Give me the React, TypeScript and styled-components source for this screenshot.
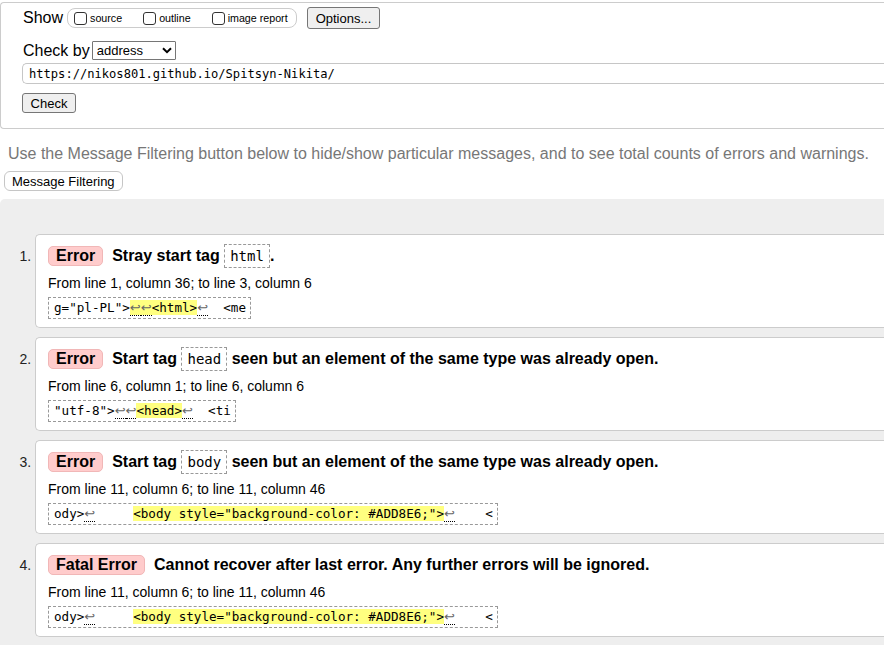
import React from "react";
import styled, { createGlobalStyle } from "styled-components";

const GlobalStyle = createGlobalStyle`
  html, body { margin: 0; padding: 0; background: #fff; }
  body {
    font-family: "Liberation Sans", Arial, sans-serif;
    color: #000;
    overflow: hidden;
  }
  * { box-sizing: border-box; }
`;

const MONO = `"DejaVu Sans Mono", "Liberation Mono", monospace`;

const Page = styled.div`
  display: flex;
  flex-direction: column;
  min-height: 645px;
`;

const Form = styled.form`
  margin-top: 2px;
  border: 1px solid #ccc;
  border-right: none;
  border-radius: 4px 0 0 4px;
  padding: 4px 0 15px 21px;
  display: flex;
  flex-direction: column;
`;

const Row = styled.div<{ $gap?: number; $h: number }>`
  display: flex;
  align-items: center;
  height: ${(p) => p.$h}px;
  margin-top: ${(p) => p.$gap ?? 0}px;
`;

const RowLabel = styled.span<{ $space: number }>`
  font-size: 16px;
  margin: 0 ${(p) => p.$space}px 0 1px;
`;

const CheckGroup = styled.fieldset`
  display: flex;
  align-items: center;
  height: 20px;
  margin: 0;
  padding: 0 8px 0 6px;
  border: 1px solid #ccc;
  border-radius: 8px;
`;

const CheckItem = styled.label`
  display: flex;
  align-items: center;
  font-size: 10.7px;
  & + & { margin-left: 21px; }
`;

const Box = styled.input`
  appearance: none;
  width: 13px;
  height: 13px;
  margin: 0 3px 0 0;
  border: 1px solid #333;
  border-radius: 3px;
  background: #fff;
`;

const GrayButton = styled.button<{ $w?: number; $h: number; $gap?: number }>`
  height: ${(p) => p.$h}px;
  ${(p) => (p.$w ? `width: ${p.$w}px;` : "")}
  margin: ${(p) => p.$gap ?? 0}px 0 0 0;
  padding: 0 7px;
  font: 13px "Liberation Sans", Arial, sans-serif;
  color: #000;
  background: #efefef;
  border: 1px solid #767676;
  border-radius: 3px;
  align-self: flex-start;
`;

const OptionsButton = styled(GrayButton)`
  margin-left: 10px;
  padding: 0 8px;
`;

const SelectWrap = styled.div`
  position: relative;
  width: 84px;
  height: 19px;
`;

const Select = styled.select`
  appearance: none;
  width: 100%;
  height: 100%;
  margin: 0;
  padding: 0 0 0 4px;
  font: 13px "Liberation Sans", Arial, sans-serif;
  color: #000;
  background: #fff;
  border: 1px solid #767676;
  border-radius: 1px;
`;

const Chevron = styled.svg`
  position: absolute;
  right: 4px;
  top: 6px;
  pointer-events: none;
`;

const UrlInput = styled.input`
  margin-top: 3px;
  width: 100%;
  height: 21px;
  padding: 0 6px;
  font: 12.1px ${MONO};
  color: #000;
  border: 1px solid #c6c6c6;
  border-right: none;
  border-radius: 5px 0 0 5px;
`;

const Intro = styled.p`
  margin: 16px 0 0 8px;
  font-size: 16px;
  line-height: 18px;
  color: #777;
  white-space: nowrap;
`;

const FilterButton = styled.button`
  align-self: flex-start;
  margin: 8px 0 0 4px;
  height: 20px;
  padding: 0 7px;
  font: 13px "Liberation Sans", Arial, sans-serif;
  color: #000;
  background: #fff;
  border: 1px solid #c6c6c6;
  border-radius: 6px;
`;

const Results = styled.div`
  margin-top: 8px;
  flex: 1;
  background: #eee;
  border-radius: 5px 0 0 0;
  padding: 35px 0 8px 0;
`;

const MessageList = styled.ol`
  margin: 0;
  padding-left: 35px;
  font-size: 14px;
  color: #222;
`;

const Message = styled.li`
  background: #fff;
  border: 1px solid #ccc;
  border-right: none;
  border-radius: 5px 0 0 5px;
  padding: 9px 12px 8px 12px;
  margin-bottom: 9px;
`;

const Title = styled.p`
  margin: 0;
  font-size: 16px;
  font-weight: bold;
  line-height: 24px;
  color: #000;
  white-space: nowrap;
`;

const Badge = styled.span`
  display: inline-block;
  background: #fcc;
  border: 1px solid #f1b7b7;
  border-radius: 5px;
  padding: 0 7px;
  line-height: 18px;
  margin-right: 9px;
`;

const Code = styled.code`
  display: inline-block;
  font: 400 14px ${MONO};
  line-height: 18px;
  padding: 2px 5px;
  border: 1px dashed #999;
`;

const Location = styled.p`
  margin: 6px 0 0;
  font-size: 14px;
  line-height: 18px;
  color: #000;
`;

const Extract = styled.div`
  margin-top: 5px;
  width: fit-content;
  padding: 2px 4px 2px 5px;
  border: 1px dashed #999;
  font: 12.6px ${MONO};
  line-height: 16px;
  white-space: pre;
  color: #000;
`;

const Highlight = styled.mark`
  background: #ffff80;
  color: #000;
`;

const LineBreak = styled.span`
  font-family: "DejaVu Sans", sans-serif;
  font-size: 13px;
  color: #666;
  border-bottom: 1px dotted #000;
`;

type Seg = { t: string; hl?: boolean };

type Msg = {
  kind: string;
  before: string;
  code?: string;
  after?: string;
  loc: string;
  extract: Seg[];
};

const messages: Msg[] = [
  {
    kind: "Error",
    before: "Stray start tag ",
    code: "html",
    after: ".",
    loc: "From line 1, column 36; to line 3, column 6",
    extract: [{ t: 'g="pl-PL">' }, { t: "↩↩<html>", hl: true }, { t: "↩  <me" }],
  },
  {
    kind: "Error",
    before: "Start tag ",
    code: "head",
    after: " seen but an element of the same type was already open.",
    loc: "From line 6, column 1; to line 6, column 6",
    extract: [{ t: '"utf-8">↩↩' }, { t: "<head>", hl: true }, { t: "↩  <ti" }],
  },
  {
    kind: "Error",
    before: "Start tag ",
    code: "body",
    after: " seen but an element of the same type was already open.",
    loc: "From line 11, column 6; to line 11, column 46",
    extract: [
      { t: "ody>↩     " },
      { t: '<body style="background-color: #ADD8E6;">', hl: true },
      { t: "↩    <" },
    ],
  },
  {
    kind: "Fatal Error",
    before: "Cannot recover after last error. Any further errors will be ignored.",
    loc: "From line 11, column 6; to line 11, column 46",
    extract: [
      { t: "ody>↩     " },
      { t: '<body style="background-color: #ADD8E6;">', hl: true },
      { t: "↩    <" },
    ],
  },
];

function renderText(t: string, key: string) {
  return t.split(/(↩)/).map((part, i) =>
    part === "↩" ? (
      <LineBreak key={`${key}-${i}`} title="Line break">
        ↩
      </LineBreak>
    ) : (
      <React.Fragment key={`${key}-${i}`}>{part}</React.Fragment>
    )
  );
}

export default function App() {
  return (
    <>
      <GlobalStyle />
      <Page>
        <Form onSubmit={(e) => e.preventDefault()}>
          <Row $h={22}>
            <RowLabel $space={4}>Show</RowLabel>
            <CheckGroup>
              <CheckItem>
                <Box type="checkbox" />
                source
              </CheckItem>
              <CheckItem>
                <Box type="checkbox" />
                outline
              </CheckItem>
              <CheckItem>
                <Box type="checkbox" />
                image report
              </CheckItem>
            </CheckGroup>
            <OptionsButton type="button" $h={22}>
              Options...
            </OptionsButton>
          </Row>
          <Row $h={19} $gap={12}>
            <RowLabel $space={2}>Check by</RowLabel>
            <SelectWrap>
              <Select defaultValue="address">
                <option value="address">address</option>
                <option value="upload">file upload</option>
                <option value="input">text input</option>
              </Select>
              <Chevron width="10" height="7" viewBox="0 0 10 7">
                <path d="M1 1.2 L5 5.2 L9 1.2" fill="none" stroke="#000" strokeWidth="2" />
              </Chevron>
            </SelectWrap>
          </Row>
          <UrlInput type="url" defaultValue="https://nikos801.github.io/Spitsyn-Nikita/" />
          <GrayButton type="submit" $h={20} $w={54} $gap={9}>
            Check
          </GrayButton>
        </Form>
        <Intro>
          Use the Message Filtering button below to hide/show particular messages, and to see total
          counts of errors and warnings.
        </Intro>
        <FilterButton type="button">Message Filtering</FilterButton>
        <Results>
          <MessageList>
            {messages.map((m, i) => (
              <Message key={i}>
                <Title>
                  <Badge>{m.kind}</Badge>
                  {m.before}
                  {m.code && <Code>{m.code}</Code>}
                  {m.after}
                </Title>
                <Location>{m.loc}</Location>
                <Extract>
                  {m.extract.map((s, j) =>
                    s.hl ? (
                      <Highlight key={j}>{renderText(s.t, `${i}-${j}`)}</Highlight>
                    ) : (
                      <React.Fragment key={j}>{renderText(s.t, `${i}-${j}`)}</React.Fragment>
                    )
                  )}
                </Extract>
              </Message>
            ))}
          </MessageList>
        </Results>
      </Page>
    </>
  );
}
